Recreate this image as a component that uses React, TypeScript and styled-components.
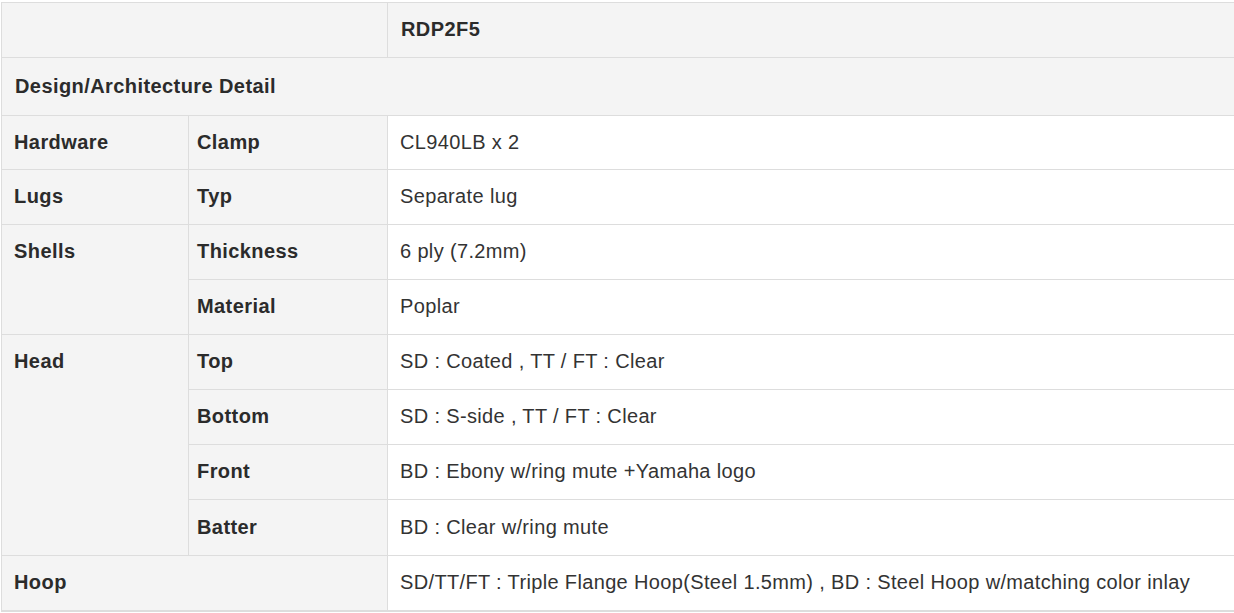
import React from "react";
import styled, { createGlobalStyle } from "styled-components";

const Global = createGlobalStyle`
  html, body { margin: 0; padding: 0; background: #fff; overflow: hidden; }
  body { font-family: "Liberation Sans", Arial, sans-serif; color: #333; }
`;

const Table = styled.div`
  display: grid;
  grid-template-columns: 187px 199px 870px;
  grid-template-rows: 55px 58px 54px 55px 55px 55px 55px 55px 55px 56px 55px;
  margin: 2px 0 0 1px;
  width: 1256px;
  border-bottom: 2px solid #dddddd;
  box-sizing: border-box;
`;

type CellProps = {
  $col: number;
  $span?: number;
  $rows?: number;
  $tone?: "grey" | "white";
  $bold?: boolean;
  $top?: boolean;
  $pad?: number;
};

const Cell = styled.div<CellProps>`
  box-sizing: border-box;
  grid-column: ${(p) => p.$col} / span ${(p) => p.$span ?? 1};
  grid-row: span ${(p) => p.$rows ?? 1};
  background: ${(p) => (p.$tone === "white" ? "#ffffff" : "#f4f4f4")};
  border-top: 1px solid #dddddd;
  border-left: 1px solid #dddddd;
  padding: ${(p) => (p.$top ? "14px" : "0")} 8px ${(p) => (p.$top ? "0" : "2px")} ${(p) => p.$pad ?? 12}px;
  display: flex;
  align-items: ${(p) => (p.$top ? "flex-start" : "center")};
  font-size: 20px;
  line-height: 24px;
  letter-spacing: ${(p) => (p.$bold ? "0.42px" : "0.35px")};
  font-weight: ${(p) => (p.$bold ? 700 : 400)};
  color: ${(p) => (p.$bold ? "#2b2b2b" : "#333333")};
  white-space: nowrap;
`;

type Row = { group?: string; groupRows?: number; label: string; value: string };

const rows: Row[] = [
  { group: "Hardware", groupRows: 1, label: "Clamp", value: "CL940LB x 2" },
  { group: "Lugs", groupRows: 1, label: "Typ", value: "Separate lug" },
  { group: "Shells", groupRows: 2, label: "Thickness", value: "6 ply (7.2mm)" },
  { label: "Material", value: "Poplar" },
  { group: "Head", groupRows: 4, label: "Top", value: "SD : Coated , TT / FT : Clear" },
  { label: "Bottom", value: "SD : S-side , TT / FT : Clear" },
  { label: "Front", value: "BD : Ebony w/ring mute +Yamaha logo" },
  { label: "Batter", value: "BD : Clear w/ring mute" },
];

export default function App() {
  return (
    <>
      <Global />
      <Table>
        <Cell $col={1} $span={2} />
        <Cell $col={3} $bold $pad={13}>RDP2F5</Cell>
        <Cell $col={1} $span={3} $bold $pad={13}>Design/Architecture Detail</Cell>
        {rows.map((r) => (
          <React.Fragment key={r.label}>
            {r.group && (
              <Cell $col={1} $rows={r.groupRows} $bold $top={(r.groupRows ?? 1) > 1} $pad={12}>
                {r.group}
              </Cell>
            )}
            <Cell $col={2} $bold $pad={8}>{r.label}</Cell>
            <Cell $col={3} $tone="white" $pad={12}>{r.value}</Cell>
          </React.Fragment>
        ))}
        <Cell $col={1} $span={2} $bold $pad={12}>Hoop</Cell>
        <Cell $col={3} $tone="white" $pad={12}>
          SD/TT/FT : Triple Flange Hoop(Steel 1.5mm) , BD : Steel Hoop w/matching color inlay
        </Cell>
      </Table>
    </>
  );
}
